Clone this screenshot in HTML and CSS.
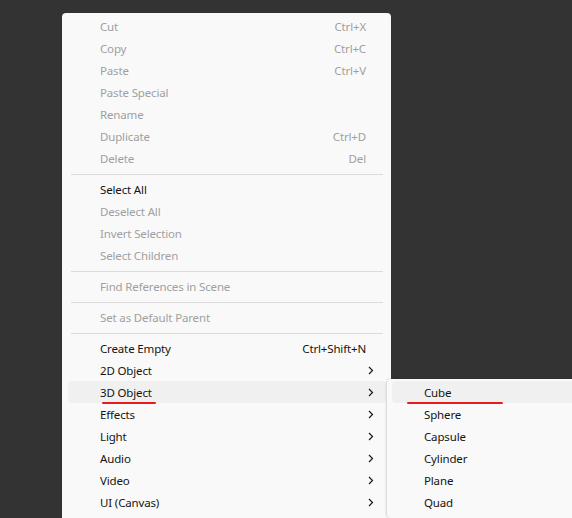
FILE: index.html
```html
<!DOCTYPE html>
<html lang="en">
<head>
    <meta charset="UTF-8">
    <title>Hierarchy context menu</title>
    <link rel="stylesheet" href="styles.css">
</head>
<body>
    <div class="scene">
        <!-- Main context menu -->
        <ul class="menu main-menu">
            <li class="item disabled"><span>Cut</span><span class="shortcut">Ctrl+X</span></li>
            <li class="item disabled"><span>Copy</span><span class="shortcut">Ctrl+C</span></li>
            <li class="item disabled"><span>Paste</span><span class="shortcut">Ctrl+V</span></li>
            <li class="item disabled"><span>Paste Special</span></li>
            <li class="item disabled"><span>Rename</span></li>
            <li class="item disabled"><span>Duplicate</span><span class="shortcut">Ctrl+D</span></li>
            <li class="item disabled"><span>Delete</span><span class="shortcut">Del</span></li>
            <li class="sep"></li>
            <li class="item"><span>Select All</span></li>
            <li class="item disabled"><span>Deselect All</span></li>
            <li class="item disabled"><span>Invert Selection</span></li>
            <li class="item disabled"><span>Select Children</span></li>
            <li class="sep"></li>
            <li class="item disabled"><span>Find References in Scene</span></li>
            <li class="sep"></li>
            <li class="item disabled"><span>Set as Default Parent</span></li>
            <li class="sep"></li>
            <li class="item"><span>Create Empty</span><span class="shortcut">Ctrl+Shift+N</span></li>
            <li class="item sub"><span>2D Object</span><svg class="arrow" viewBox="0 0 6 9"><polyline points="1,1 4.5,4.5 1,8"/></svg></li>
            <li class="item sub active"><span class="marked">3D Object</span><svg class="arrow" viewBox="0 0 6 9"><polyline points="1,1 4.5,4.5 1,8"/></svg></li>
            <li class="item sub"><span>Effects</span><svg class="arrow" viewBox="0 0 6 9"><polyline points="1,1 4.5,4.5 1,8"/></svg></li>
            <li class="item sub"><span>Light</span><svg class="arrow" viewBox="0 0 6 9"><polyline points="1,1 4.5,4.5 1,8"/></svg></li>
            <li class="item sub"><span>Audio</span><svg class="arrow" viewBox="0 0 6 9"><polyline points="1,1 4.5,4.5 1,8"/></svg></li>
            <li class="item sub"><span>Video</span><svg class="arrow" viewBox="0 0 6 9"><polyline points="1,1 4.5,4.5 1,8"/></svg></li>
            <li class="item sub"><span>UI (Canvas)</span><svg class="arrow" viewBox="0 0 6 9"><polyline points="1,1 4.5,4.5 1,8"/></svg></li>
        </ul>

        <!-- 3D Object submenu -->
        <ul class="menu sub-menu">
            <li class="item active"><span class="marked wide">Cube</span></li>
            <li class="item"><span>Sphere</span></li>
            <li class="item"><span>Capsule</span></li>
            <li class="item"><span>Cylinder</span></li>
            <li class="item"><span>Plane</span></li>
            <li class="item"><span>Quad</span></li>
        </ul>
    </div>
</body>
</html>
```

FILE: styles.css
```css
body, html {
    margin: 0;
    padding: 0;
    background-color: #333333;
    font-family: 'Noto Sans', 'Open Sans', sans-serif;
    font-size: 11.5px;
    letter-spacing: -0.15px;
    overflow: hidden;
}

.scene {
    position: relative;
    width: 572px;
    height: 518px;
}

.menu {
    list-style: none;
    margin: 0;
    background: #f9f9f9;
    border-radius: 4px;
    box-shadow: 0 0 1px rgba(0, 0, 0, 0.35);
}

/* Popups float over the editor */
.main-menu {
    position: absolute;
    left: 62px;
    top: 13px;
    bottom: 0;
    width: 329px;
    padding: 2px 0 0;
    border-bottom-left-radius: 0;
    border-bottom-right-radius: 0;
}

.sub-menu {
    position: absolute;
    left: 387px;
    top: 379px;
    bottom: 0;
    width: 200px;
    padding: 2px 0 0;
    box-shadow: -1px 0 2px rgba(0, 0, 0, 0.15);
}

.item {
    display: flex;
    align-items: center;
    height: 22px;
    margin: 0 5px 0 6px;
    padding: 0 20px 0 32px;
    border-radius: 4px;
    color: #141414;
    white-space: nowrap;
}

.sub-menu .item {
    margin: 0 0 0 5px;
    padding-left: 32px;
}

.item.disabled {
    color: #a0a0a0;
}

.item.active {
    background: #f0f0f0;
}

.shortcut {
    margin-left: auto;
}

.arrow {
    margin-left: auto;
    margin-right: -8px;
    width: 6px;
    height: 9px;
    fill: none;
    stroke: #1b1b1b;
    stroke-width: 1.2;
}

.sep {
    height: 1px;
    margin: 5px 8px 3px 9px;
    background: #dcdcdc;
}

/* Red hand-drawn underline marks */
.marked {
    position: relative;
}

.marked::after {
    content: '';
    position: absolute;
    left: 2px;
    right: -4px;
    bottom: -4px;
    height: 2px;
    border-radius: 1px;
    background: #e81c1c;
}

.marked.wide::after {
    left: -17px;
    right: -52px;
}
```
